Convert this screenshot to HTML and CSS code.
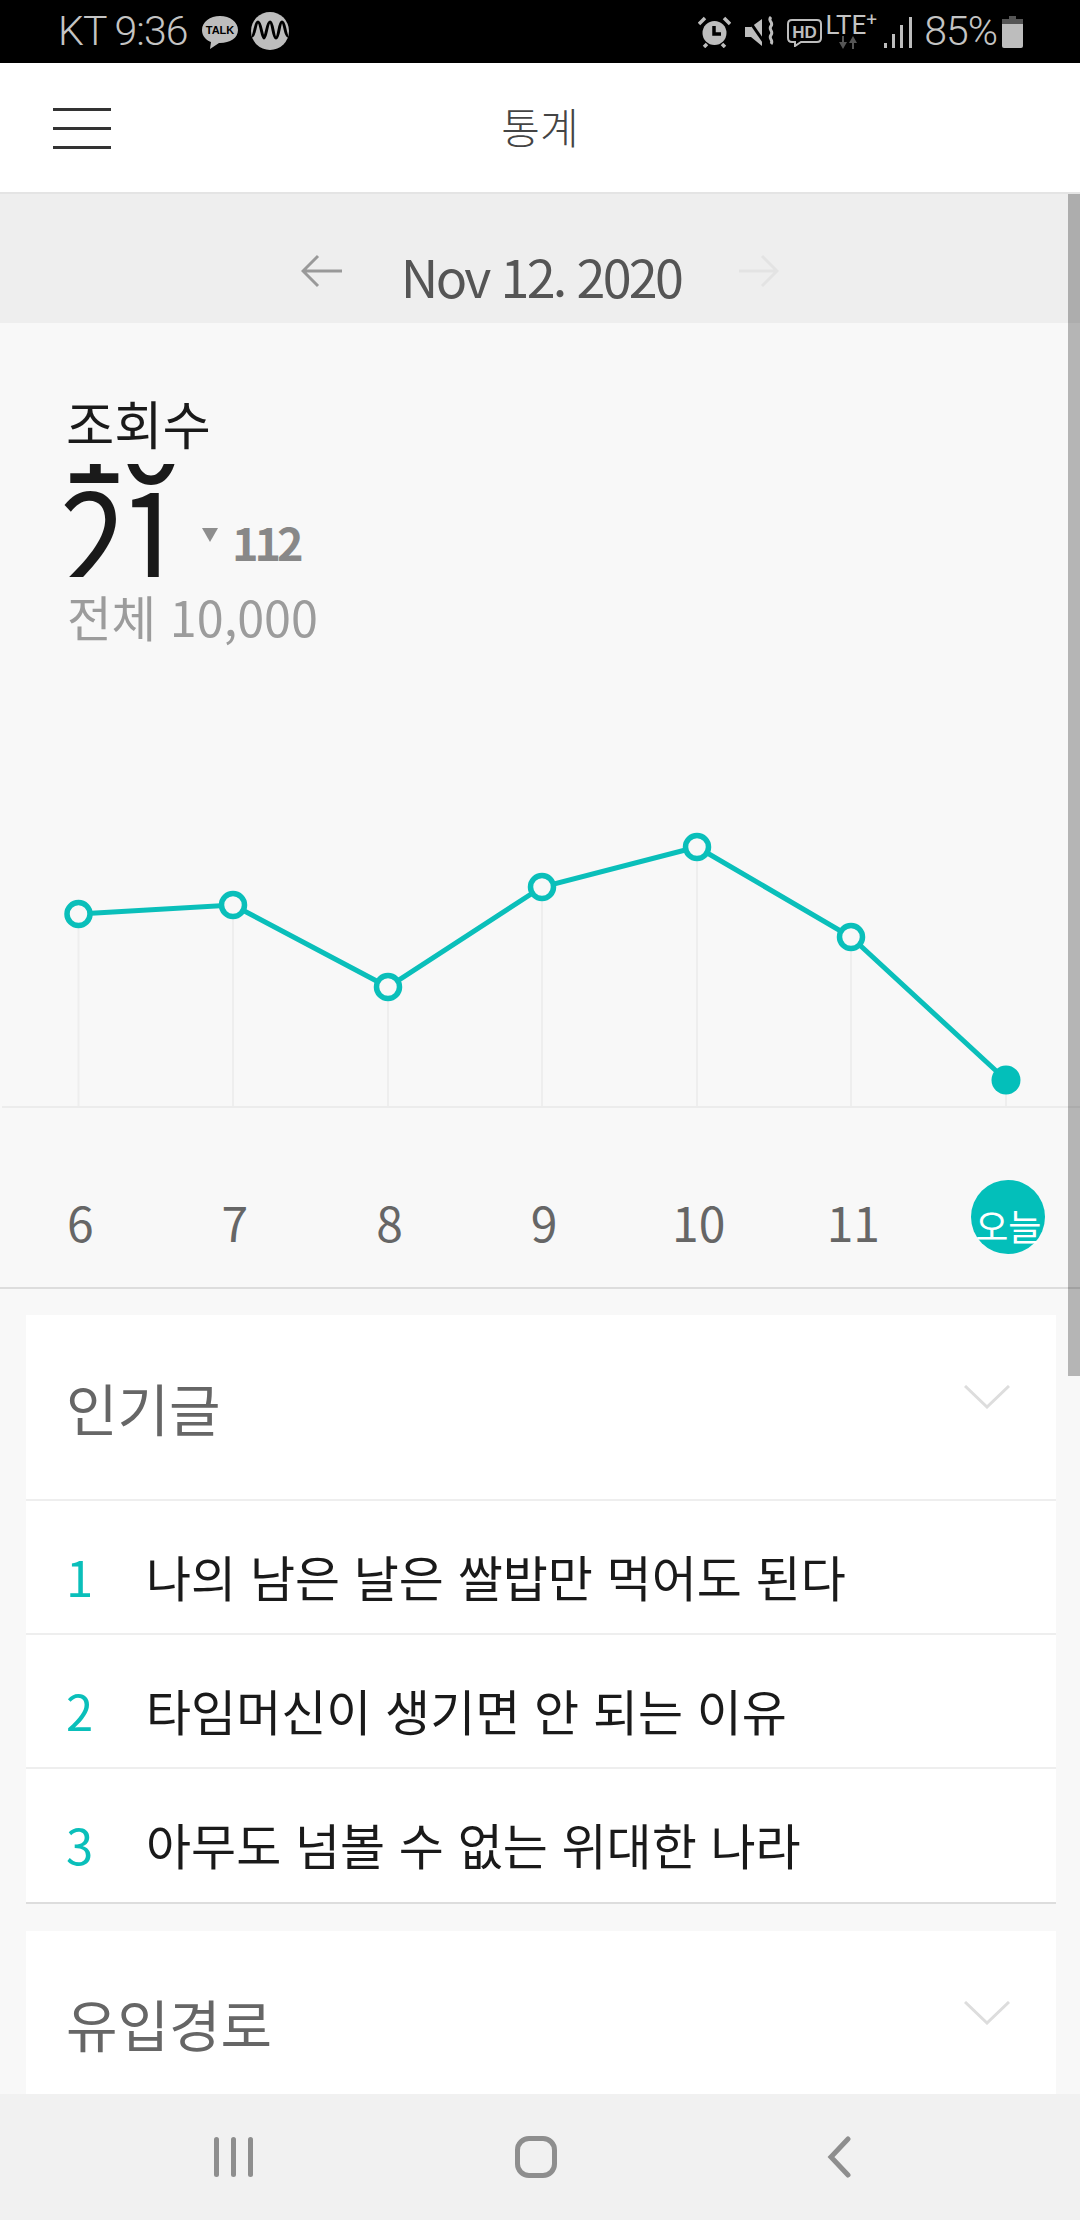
FILE: index.html
```html
<!DOCTYPE html>
<html lang="ko">
<head>
<meta charset="utf-8">
<title>통계</title>
<link rel="stylesheet" href="styles.css">
</head>
<body>
<div class="app">
  <div class="status">
    <div class="status-left">
      <span class="status-text carrier">KT 9:36</span>
      <svg class="ic-talk" width="36" height="33" viewBox="0 0 36 33"><path class="si" d="M18 0C8 0 0 6 0 14c0 6 4 10 9 12l-1 7 9-6h1c10 0 18-5 18-13S28 0 18 0z"/><text class="talk-text" x="18" y="18" text-anchor="middle">TALK</text></svg>
      <svg class="ic-wave" width="38" height="38" viewBox="0 0 38 38"><circle class="si" cx="19" cy="19" r="19"/><path class="wave" d="M1 24c3 0 3-14 6-14s4 16 6 16 3-16 6-16 3 16 6 16 3-16 6-16 3 14 6 14"/></svg>
    </div>
    <div class="status-right">
      <svg class="ic-alarm" width="33" height="32" viewBox="0 0 33 32"><circle class="si" cx="16.5" cy="17" r="12"/><path class="clock" d="M16 10v8h7"/><path class="si-line" d="M1 8l6-6M32 8l-6-6M6 31l3-3M27 31l-3-3"/></svg>
      <svg class="ic-mute" width="32" height="32" viewBox="0 0 32 32"><path class="si" d="M0 11h6l11-8v27L6 21H0z"/><path class="cut" d="M3 3l18 26"/><path class="si-thin" d="M26 1c-4 4 3 5 0 9s3 5 0 9 3 5 0 9"/></svg>
      <svg class="ic-hd" width="35" height="28" viewBox="0 0 35 28"><path class="hd-box" d="M5 1h25q4 0 4 4v14q0 4-4 4H14l-6 4v-4H5q-4 0-4-4V5q0-4 4-4z"/><text class="hd-text" x="17.5" y="18.5" text-anchor="middle">HD</text></svg>
      <div class="lte">
        <span class="lte-text">LTE<sup class="lte-plus">+</sup></span>
        <svg class="ic-updown" width="20" height="13" viewBox="0 0 20 13"><path class="updown" d="M1 6h8l-4 7zM4 0h2v7H4zM11 7l4-7 4 7zM14 6h2v7h-2z"/></svg>
      </div>
      <svg class="ic-signal" width="28" height="31" viewBox="0 0 28 31"><rect class="si" x="0" y="26" width="3" height="5"/><rect class="si" x="8" y="17" width="3" height="14"/><rect class="si" x="16" y="8" width="3" height="23"/><rect class="si" x="25" y="0" width="3" height="31"/></svg>
      <span class="status-text pct">85%</span>
      <svg class="ic-batt" width="21" height="32" viewBox="0 0 21 32"><path class="batt-top" d="M7 0h7v3h7v5H0V3h7z"/><path class="si" d="M0 8h21v22q0 2-2 2H2q-2 0-2-2z"/></svg>
    </div>
  </div>

  <header class="topbar">
    <div class="burger"><i></i><i></i><i></i></div>
    <h1 class="title">통계</h1>
  </header>

  <main class="scroller">
    <div class="scrollbar"></div>

    <div class="dateband">
      <svg class="arrow" width="42" height="34" viewBox="0 0 42 34"><path class="arrow-prev" d="M41 17H2M17 2L2 17l15 15"/></svg>
      <span class="date">Nov 12. 2020</span>
      <svg class="arrow" width="40" height="34" viewBox="0 0 40 34"><path class="arrow-next" d="M0 17h38M23 2l15 15-15 15"/></svg>
    </div>

    <section class="stats">
      <div class="stat-label">조회수</div>
      <div class="stat-row">
        <div class="odo">
          <div class="odo-col"><span class="digit">1</span><span class="digit">2</span></div>
          <div class="odo-col"><span class="digit">0</span><span class="digit">1</span></div>
        </div>
        <svg class="tri" width="18" height="16" viewBox="0 0 18 16"><path d="M1 1h16l-8 14z"/></svg>
        <span class="delta">112</span>
      </div>
      <div class="stat-total">전체 10,000</div>
    </section>

    <svg class="chart" width="1080" height="309" viewBox="0 800 1080 309">
      <g class="grid">
        <path d="M78.5 914V1106M233 905V1106M388 987V1106M542 887V1106M697 847V1106M851 937V1106M1006 1080V1106"/>
      </g>
      <path class="base" d="M2 1107H1080"/>
      <path class="line" d="M78.5 914L233 905L388 987L542 887L697 847L851 937L1006 1080"/>
      <circle class="pt" cx="78.5" cy="914" r="11.5"/>
      <circle class="pt" cx="233" cy="905" r="11.5"/>
      <circle class="pt" cx="388" cy="987" r="11.5"/>
      <circle class="pt" cx="542" cy="887" r="11.5"/>
      <circle class="pt" cx="697" cy="847" r="11.5"/>
      <circle class="pt" cx="851" cy="937" r="11.5"/>
      <circle class="pt-on" cx="1006" cy="1080" r="14.5"/>
    </svg>

    <div class="days">
      <span class="day">6</span>
      <span class="day">7</span>
      <span class="day">8</span>
      <span class="day">9</span>
      <span class="day">10</span>
      <span class="day">11</span>
      <span class="day today">오늘</span>
    </div>

    <section class="card">
      <div class="card-head">
        <h2 class="card-title">인기글</h2>
        <svg class="chev" width="46" height="24" viewBox="0 0 46 24"><path d="M1 1l22 21L45 1"/></svg>
      </div>
      <ol class="rank-list">
        <li class="rank-row"><span class="rank-no">1</span><span class="rank-text">나의 남은 날은 쌀밥만 먹어도 된다</span></li>
        <li class="rank-row"><span class="rank-no">2</span><span class="rank-text">타임머신이 생기면 안 되는 이유</span></li>
        <li class="rank-row last"><span class="rank-no">3</span><span class="rank-text">아무도 넘볼 수 없는 위대한 나라</span></li>
      </ol>
    </section>

    <section class="card second">
      <div class="card-head">
        <h2 class="card-title">유입경로</h2>
        <svg class="chev" width="46" height="24" viewBox="0 0 46 24"><path d="M1 1l22 21L45 1"/></svg>
      </div>
    </section>
  </main>

  <nav class="navbar">
    <div class="nav-cell"><div class="recents"><i></i><i></i><i></i></div></div>
    <div class="nav-cell"><div class="home"></div></div>
    <div class="nav-cell"><svg class="back" width="24" height="42" viewBox="0 0 24 42"><path d="M21 3L4 21l17 18"/></svg></div>
  </nav>
</div>
</body>
</html>
```

FILE: styles.css
```css
* { box-sizing: border-box; }
html, body { margin: 0; padding: 0; }
body {
  width: 1080px;
  height: 2220px;
  overflow: hidden;
  font-family: "Noto Sans CJK KR", "Noto Sans", sans-serif;
  background: #f8f8f8;
}
.app { display: flex; flex-direction: column; height: 2220px; }

/* status bar */
.status {
  flex: 0 0 63px;
  height: 63px;
  background: #000;
  display: flex;
  justify-content: space-between;
  align-items: center;
  padding: 0 57px 0 58px;
}
.status-left, .status-right { display: flex; align-items: center; }
.status-text {
  font-family: Roboto, sans-serif;
  font-weight: 300;
  color: #c4c4c4;
  font-size: 41px;
  line-height: 63px;
  letter-spacing: -1px;
}
.carrier { margin-right: 15px; }
.ic-talk { margin-right: 13px; margin-top: 2px; }
.ic-wave { margin-top: -1px; }
.si { fill: #bdbdbd; }
.si-line { stroke: #bdbdbd; stroke-width: 3.5; fill: none; }
.si-thin { stroke: #bdbdbd; stroke-width: 3; fill: none; }
.talk-text { font-family: "Liberation Sans", sans-serif; font-weight: 700; font-size: 11px; fill: #000; }
.wave { fill: none; stroke: #000; stroke-width: 3; }
.clock { fill: none; stroke: #000; stroke-width: 3.5; }
.cut { stroke: #000; stroke-width: 3; }
.hd-box { fill: none; stroke: #bdbdbd; stroke-width: 2; }
.hd-text { font-family: "Liberation Sans", sans-serif; font-size: 17px; font-weight: 700; fill: #bdbdbd; }
.updown { fill: #555; }
.batt-top { fill: #555; }
.ic-alarm { margin-right: 14px; }
.ic-mute { margin-right: 10px; }
.ic-hd { margin-right: 3px; margin-top: 3px; }
.lte { display: flex; flex-direction: column; align-items: center; width: 52px; margin-right: 7px; }
.lte-text {
  font-family: Roboto, sans-serif;
  color: #c4c4c4;
  font-size: 26px;
  line-height: 22px;
  height: 22px;
  white-space: nowrap;
}
.lte-plus { font-size: 19px; line-height: 0; vertical-align: 8px; }
.ic-updown { margin-right: 6px; }
.ic-signal { margin-right: 12px; margin-top: 2px; }
.pct { margin-right: 5px; }

/* header */
.topbar {
  flex: 0 0 131px;
  height: 131px;
  background: #fff;
  border-bottom: 2px solid #e4e4e4;
  display: flex;
  align-items: center;
  justify-content: center;
  position: relative;
}
.burger {
  position: absolute;
  left: 53px;
  top: 45px;
  width: 58px;
  height: 41px;
  display: flex;
  flex-direction: column;
  justify-content: space-between;
}
.burger i { display: block; height: 3px; background: #333; }
.title {
  margin: -4px 0 0;
  font-size: 42px;
  font-weight: 300;
  color: #444;
  line-height: 60px;
}

/* scroll area */
.scroller { flex: 1 1 auto; position: relative; overflow: hidden; background: #f8f8f8; }
.scrollbar {
  position: absolute;
  top: 0;
  right: 0;
  width: 12px;
  height: 1182px;
  background: rgba(0, 0, 0, 0.27);
}
.dateband {
  height: 129px;
  background: #eee;
  display: flex;
  align-items: flex-start;
  justify-content: center;
  gap: 58px;
  padding-top: 60px;
}
.arrow-prev { fill: none; stroke: #999; stroke-width: 3; }
.arrow-next { fill: none; stroke: #e3e3e3; stroke-width: 3; }
.date {
  font-size: 52px;
  line-height: 60px;
  color: #555;
  letter-spacing: -2.7px;
  margin-top: -8px;
}

/* stats */
.stats { height: 477px; padding: 69px 0 0 66px; }
.stat-label { font-size: 52.5px; line-height: 60px; color: #1a1a1a; }
.stat-row { display: flex; align-items: flex-start; height: 113px; margin-top: 12px; }
.odo { display: flex; height: 113px; overflow: hidden; margin-left: -2px; font-size: 130px; line-height: 105px; color: #1a1a1a; }
.odo-col { width: 58px; margin-top: -90px; display: flex; flex-direction: column; transform: scaleX(0.92); }
.digit { display: flex; justify-content: center; height: 105px; }
.tri { margin: 63px 0 0 21px; fill: #8e8e8e; }
.delta { font-size: 45px; font-weight: 700; color: #888; line-height: 60px; margin: 48px 0 0 13px; letter-spacing: -4px; }
.stat-total { font-size: 48.5px; line-height: 60px; color: #9c9c9c; margin-top: 9px; margin-left: 1px; }

/* chart */
.chart { display: block; }
.grid path { stroke: #eee; stroke-width: 2; fill: none; }
.base { stroke: #ececec; stroke-width: 2; fill: none; }
.line { stroke: #0abfba; stroke-width: 5; fill: none; }
.pt { fill: #f8f8f8; stroke: #0abfba; stroke-width: 5.5; }
.pt-on { fill: #03bfba; }

.days {
  height: 180px;
  border-bottom: 2px solid #ddd;
  display: grid;
  grid-template-columns: repeat(7, 154.6px);
  align-items: center;
  justify-items: center;
  padding: 46px 0 0 3px;
}
.day { font-size: 48px; line-height: 60px; color: #666; }
.today {
  width: 74px;
  height: 74px;
  border-radius: 50%;
  background: #03bfba;
  color: #fff;
  font-size: 36px;
  line-height: 90px;
  text-align: center;
  white-space: nowrap;
  margin: 0 0 8px 1px;
}

/* cards */
.card { margin: 26px 24px 0 26px; background: #fff; }
.card.second { margin-top: 27px; height: 170px; }
.card-head {
  height: 186px;
  border-bottom: 2px solid #eee;
  display: flex;
  justify-content: space-between;
  padding: 57px 46px 0 40px;
}
.second .card-head { border-bottom: 0; }
.card-title { margin: 0; font-size: 56px; font-weight: 400; line-height: 70px; color: #666; }
.chev { fill: none; stroke: #ddd; stroke-width: 3; }
.card-head .chev { margin-top: 13px; }
.rank-list { list-style: none; margin: 0; padding: 0; }
.rank-row {
  height: 134px;
  border-bottom: 2px solid #eee;
  display: flex;
  align-items: center;
  padding: 17px 0 0 40px;
}
.rank-row.last { border-bottom-color: #ddd; height: 135px; }
.rank-no { width: 80px; font-size: 49px; color: #0abfba; line-height: 60px; }
.rank-text { font-size: 49px; color: #1a1a1a; line-height: 60px; }

/* nav */
.navbar {
  flex: 0 0 126px;
  height: 126px;
  background: #f1f1f1;
  display: grid;
  grid-template-columns: repeat(3, 303px);
  justify-content: center;
  align-items: center;
  padding-right: 8px;
  position: relative;
  z-index: 1;
}
.nav-cell { display: flex; justify-content: center; align-items: center; }
.recents { display: flex; gap: 12px; }
.recents i { display: block; width: 5px; height: 40px; border-radius: 3px; background: #8e8e8e; }
.home { width: 42px; height: 42px; border: 5px solid #8e8e8e; border-radius: 14px; }
.back { fill: none; stroke: #8e8e8e; stroke-width: 5; stroke-linecap: round; }
```
